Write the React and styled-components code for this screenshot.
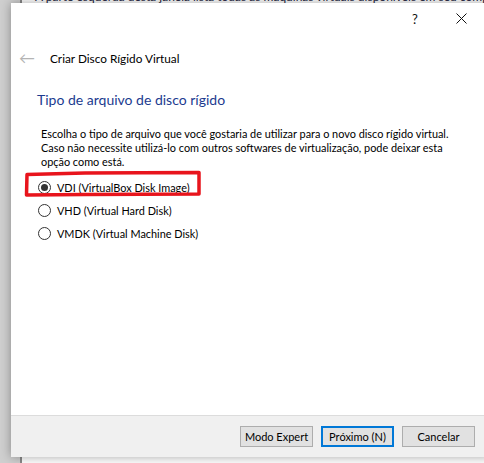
import React from "react";
import styled, { createGlobalStyle } from "styled-components";

const Global = createGlobalStyle`
  html, body {
    margin: 0;
    padding: 0;
    overflow: hidden;
  }
  body {
    font-family: "Segoe UI", Lato, "Noto Sans", sans-serif;
    color: #000;
  }
`;

const Desktop = styled.div`
  position: relative;
  width: 484px;
  height: 463px;
  overflow: hidden;
  background: #cfcfcf;
`;

const BackWindow = styled.div`
  position: absolute;
  left: 20px;
  top: -20px;
  right: 0;
  bottom: 0;
  background: #fff;
  border-left: 2px solid #8a8a8a;
`;

const BackText = styled.div`
  padding: 10px 0 0 13px;
  font-size: 12px;
  line-height: 14px;
  white-space: nowrap;
  color: #1b2340;
`;

const Dialog = styled.div`
  position: absolute;
  left: 11px;
  top: 3px;
  width: 480px;
  height: 454px;
  background: #fff;
  box-shadow: 0 0 10px rgba(0, 0, 0, 0.35);
  display: flex;
  flex-direction: column;
`;

const TitleBar = styled.div`
  height: 31px;
  display: flex;
  justify-content: flex-end;
  align-items: center;
  padding-right: 7px;
`;

const TitleButton = styled.span`
  width: 46px;
  display: flex;
  justify-content: center;
  font-size: 13px;
  color: #111;
`;

const Header = styled.div`
  display: flex;
  align-items: center;
  height: 24px;
  margin-top: 12px;
  padding-left: 8px;
  gap: 15px;
`;

const BackArrow = styled.span`
  color: #b4b4b4;
  font-size: 16px;
  line-height: 1;
`;

const HeaderTitle = styled.span`
  font-size: 11.8px;
`;

const Body = styled.div`
  flex: 1;
  padding: 20px 0 0 26px;
`;

const Heading = styled.h1`
  margin: 0;
  font-size: 14px;
  font-weight: 400;
  color: #1c3b8f;
  line-height: 20px;
`;

const Paragraph = styled.p`
  margin: 17px 0 0 4px;
  font-size: 10.9px;
  line-height: 14px;
  white-space: nowrap;
`;

const Options = styled.div`
  position: relative;
  margin-top: 11px;
  padding-left: 1px;
  display: flex;
  flex-direction: column;
  gap: 9px;
`;

const Option = styled.label`
  display: flex;
  align-items: center;
  gap: 6px;
  height: 14px;
  font-size: 10.9px;
`;

const Radio = styled.span`
  width: 11px;
  height: 11px;
  border: 1px solid #333;
  border-radius: 50%;
  display: flex;
  align-items: center;
  justify-content: center;
  &::after {
    content: "";
    width: 7px;
    height: 7px;
    border-radius: 50%;
    background: ${(p) => (p.$checked ? "#333" : "transparent")};
  }
`;

const Highlight = styled.svg`
  position: absolute;
  left: -12px;
  top: -9px;
  width: 176px;
  height: 25px;
  overflow: visible;
`;

const Footer = styled.div`
  height: 41px;
  background: #f0f0f0;
  border-top: 1px solid #dcdcdc;
  display: flex;
  align-items: center;
  justify-content: flex-end;
  gap: 8px;
  padding-right: 16px;
`;

const Button = styled.button`
  width: 73px;
  height: 21px;
  padding: 0;
  font-family: inherit;
  font-size: 11px;
  color: #000;
  background: #e1e1e1;
  border: ${(p) => (p.$default ? "2px solid #0078d7" : "1px solid #adadad")};
`;

const options = [
  { label: "VDI (VirtualBox Disk Image)", checked: true },
  { label: "VHD (Virtual Hard Disk)" },
  { label: "VMDK (Virtual Machine Disk)" },
];

export default function App() {
  return (
    <>
      <Global />
      <Desktop>
        <BackWindow>
          <BackText>
            A parte esquerda desta janela lista todas as máquinas virtuais disponíveis em seu computador.
          </BackText>
        </BackWindow>
        <Dialog>
          <TitleBar>
            <TitleButton>?</TitleButton>
            <TitleButton>
              <svg width="11" height="11" viewBox="0 0 11 11">
                <path d="M0.5 0.5 L10.5 10.5 M10.5 0.5 L0.5 10.5" stroke="#111" strokeWidth="1" />
              </svg>
            </TitleButton>
          </TitleBar>
          <Header>
            <BackArrow>←</BackArrow>
            <HeaderTitle>Criar Disco Rígido Virtual</HeaderTitle>
          </Header>
          <Body>
            <Heading>Tipo de arquivo de disco rígido</Heading>
            <Paragraph>
              Escolha o tipo de arquivo que você gostaria de utilizar para o novo disco rígido virtual.
              <br />
              Caso não necessite utilizá-lo com outros softwares de virtualização, pode deixar esta
              <br />
              opção como está.
            </Paragraph>
            <Options>
              {options.map((o) => (
                <Option key={o.label}>
                  <Radio $checked={o.checked} />
                  {o.label}
                </Option>
              ))}
              <Highlight viewBox="0 0 176 25">
                <path
                  d="M2 3.5 L60 2 L174 1.5 L174 23 L60 23.5 L1.5 24 Z"
                  fill="none"
                  stroke="#e8141c"
                  strokeWidth="3.5"
                  strokeLinejoin="round"
                />
              </Highlight>
            </Options>
          </Body>
          <Footer>
            <Button>Modo Expert</Button>
            <Button $default>Próximo (N)</Button>
            <Button>Cancelar</Button>
          </Footer>
        </Dialog>
      </Desktop>
    </>
  );
}
